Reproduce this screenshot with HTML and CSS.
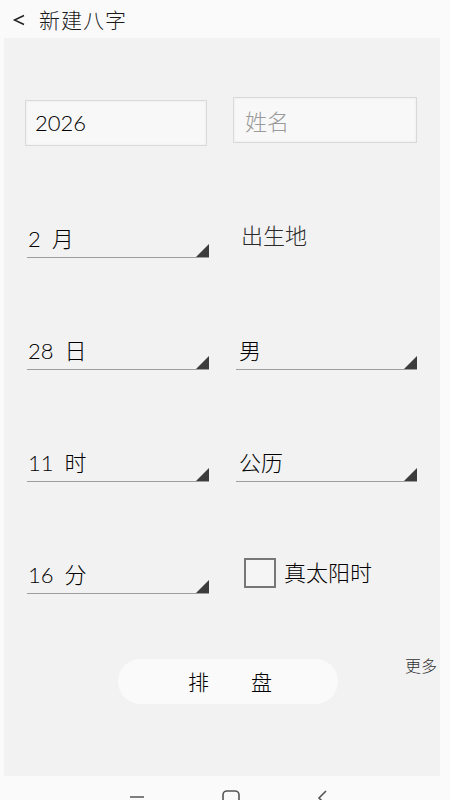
FILE: index.html
```html
<!DOCTYPE html>
<html lang="zh">
<head>
<meta charset="utf-8">
<link rel="stylesheet" href="styles.css">
</head>
<body>
<header class="topbar">
  <svg class="back" width="14" height="14" viewBox="0 0 14 14"><path d="M12 2.5L2.5 7l9.5 4.5" stroke="#222" stroke-width="1.5" fill="none"/></svg>
  <span class="title">新建八字</span>
</header>
<main class="panel">
  <div class="form">
    <div class="field">2026</div>
    <div class="field placeholder">姓名</div>

    <div class="spinner"><span class="val">2 月</span><span class="tri"></span></div>
    <div class="plain"><span class="val">出生地</span></div>

    <div class="spinner"><span class="val">28 日</span><span class="tri"></span></div>
    <div class="spinner right"><span class="val">男</span><span class="tri"></span></div>

    <div class="spinner"><span class="val">11 时</span><span class="tri"></span></div>
    <div class="spinner right"><span class="val">公历</span><span class="tri"></span></div>

    <div class="spinner"><span class="val">16 分</span><span class="tri"></span></div>
    <label class="check"><span class="box"></span><span class="val">真太阳时</span></label>
  </div>
  <div class="actions">
    <button class="pill"><span>排</span><span>盘</span></button>
    <span class="more">更多</span>
  </div>
</main>
<nav class="navbar">
  <svg class="nav-ico" width="18" height="12" viewBox="0 0 18 12"><path d="M2 5h14M2 10h14" stroke="#555" stroke-width="1.6" fill="none"/></svg>
  <svg class="nav-ico" width="20" height="14" viewBox="0 0 20 14"><path d="M2 14V5a4 4 0 0 1 4-4h8a4 4 0 0 1 4 4v9" stroke="#555" stroke-width="1.6" fill="none"/></svg>
  <svg class="nav-ico" width="12" height="14" viewBox="0 0 12 14"><path d="M10 1L3 8l7 7" stroke="#555" stroke-width="1.6" fill="none"/></svg>
</nav>
</body>
</html>
```

FILE: styles.css
```css
* { box-sizing: border-box; }
html, body { margin: 0; padding: 0; }
body {
  width: 450px;
  height: 800px;
  overflow: hidden;
  background: #fafafa;
  font-family: Lato, "Noto Sans CJK SC", sans-serif;
  font-weight: 300;
  color: #111;
}
.topbar {
  height: 38px;
  display: flex;
  align-items: center;
  padding-left: 12px;
  gap: 13px;
  font-size: 21px;
  color: #1a1a1a;
  background: #fafafa;
}
.back { display: block; margin-top: 1px; }
.title { letter-spacing: 1px; }
.panel {
  margin-left: 4px;
  width: 436px;
  height: 738px;
  background: #f2f2f2;
  padding: 62px 3px 0 21px;
  display: flex;
  flex-direction: column;
}
.form {
  display: grid;
  grid-template-columns: 184px 182px;
  column-gap: 26px;
  row-gap: 76px;
  grid-template-rows: 46px 36px 36px 36px 36px;
}
.field {
  background: #f8f8f8;
  border: 1px solid #d9d9d9;
  box-shadow: inset 0 0 3px rgba(0,0,0,0.06);
  font-size: 22px;
  display: flex;
  align-items: center;
  padding: 0 9px 2px;
  color: #000;
}
.field:first-child { width: 182px; }
.field.placeholder { color: #9a9a9a; margin-top: -3px; margin-left: -2px; height: 46px; align-items: flex-start; padding-top: 6px; padding-left: 11px; }
.spinner {
  display: flex;
  justify-content: space-between;
  align-items: flex-end;
  border-bottom: 1px solid #9e9e9e;
  padding-left: 1px;
  margin-left: 2px;
}
.spinner.right { margin-left: 1px; padding-left: 3px; }
.val {
  font-size: 22px;
  line-height: 26px;
  padding-bottom: 5px;
  color: #000;
  word-spacing: 5px;
}
.tri {
  width: 13px;
  height: 13px;
  background: #3c3c3c;
  clip-path: polygon(100% 0, 100% 100%, 0 100%);
}
.plain {
  display: flex;
  align-items: flex-end;
  padding-left: 6px;
}
.plain .val { color: #2a2a2a; padding-bottom: 9px; }
.check {
  display: flex;
  align-items: center;
  gap: 8px;
  padding-left: 9px;
  height: 30px;
}
.box {
  width: 32px;
  height: 30px;
  border: 2px solid #777;
  background: #f5f5f5;
}
.check .val { padding-bottom: 0; }
.actions {
  display: flex;
  align-items: flex-start;
  margin-top: 65px;
  padding-left: 93px;
}
.pill {
  width: 220px;
  height: 45px;
  border: none;
  border-radius: 23px;
  background: #fafafa;
  display: flex;
  justify-content: center;
  align-items: center;
  gap: 42px;
  font-family: inherit;
  font-weight: 300;
  font-size: 21px;
  color: #000;
  padding: 0 0 2px 4px;
}
.more {
  margin-left: auto;
  font-size: 16px;
  color: #333;
  margin-top: -6px;
}
.navbar {
  height: 24px;
  display: flex;
  justify-content: center;
  align-items: flex-end;
  gap: 75px;
  padding-left: 6px;
  overflow: hidden;
}
.nav-ico { display: block; margin-bottom: -4px; }
```
